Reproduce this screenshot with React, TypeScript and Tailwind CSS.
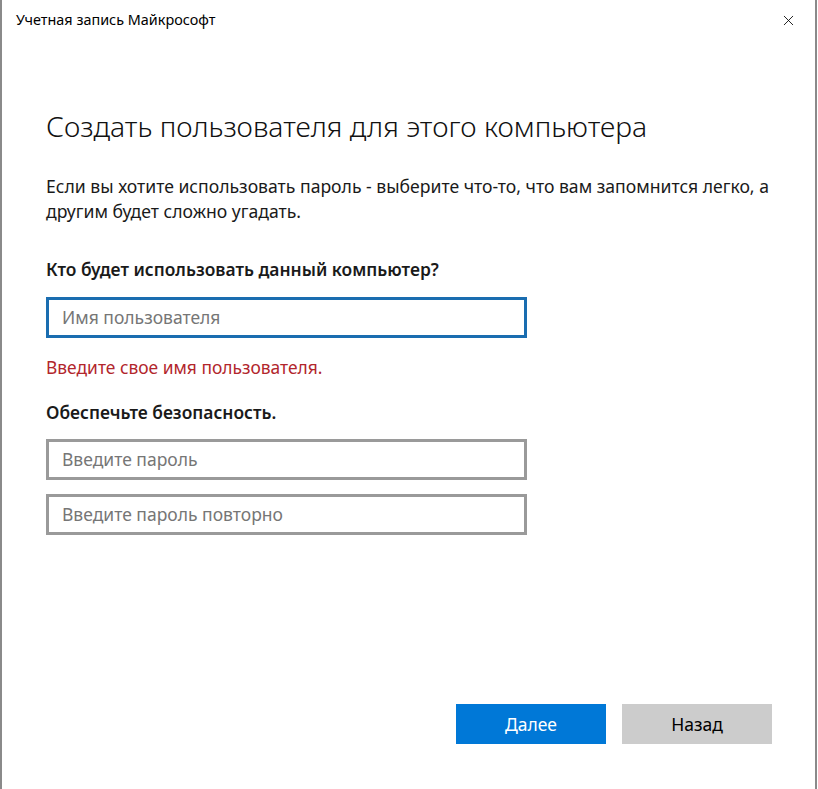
import { X } from 'lucide-react'

/* ── Field ─────────────────────────────────── */

function Field({ placeholder, focused }: { placeholder: string; focused?: boolean }) {
  return (
    <div
      className={[
        'w-[481px] h-[41px] border-[3px] flex items-center px-[13px] bg-white',
        focused ? 'border-[#1a6db0]' : 'border-[#9a9a9a]',
      ].join(' ')}
    >
      <span className="text-[17.5px] text-[#767676]">{placeholder}</span>
    </div>
  )
}

/* ── App ───────────────────────────────────── */

export default function App() {
  return (
    <div className="w-[818px] h-[789px] bg-white flex font-['Noto_Sans',sans-serif] text-[#1a1a1a]">
      <div className="flex-1 h-full border-l-2 border-r-2 border-[#8a8a8a] flex flex-col">
        {/* Title bar */}
        <div className="h-[40px] flex items-center justify-between pl-[14px] pr-[18px]">
          <span className="text-[14.4px] text-black">Учетная запись Майкрософт</span>
          <X size={17} strokeWidth={1.2} className="text-black" />
        </div>

        <div className="pl-[44px] flex flex-col flex-1">
          <h1 className="mt-[68px] text-[28.3px] font-light leading-[36px] text-[#111]">
            Создать пользователя для этого компьютера
          </h1>

          <p className="mt-[30px] text-[17.6px] leading-[25px] w-[760px]">
            Если вы хотите использовать пароль - выберите что-то, что вам запомнится легко, а
            другим будет сложно угадать.
          </p>

          <h2 className="mt-[33px] text-[17.4px] font-semibold leading-[24px]">
            Кто будет использовать данный компьютер?
          </h2>

          <div className="mt-[16px]">
            <Field placeholder="Имя пользователя" focused />
          </div>

          <p className="mt-[17px] text-[17.4px] leading-[24px] text-[#b2262c]">
            Введите свое имя пользователя.
          </p>

          <h2 className="mt-[21px] text-[17.4px] font-semibold leading-[24px]">
            Обеспечьте безопасность.
          </h2>

          <div className="mt-[15px] flex flex-col gap-[14px]">
            <Field placeholder="Введите пароль" />
            <Field placeholder="Введите пароль повторно" />
          </div>

          <div className="mt-auto mb-[45px] flex justify-end gap-[16px] pr-[43px]">
            <button className="w-[150px] h-[40px] bg-[#0078d7] text-white text-[17.5px]">
              Далее
            </button>
            <button className="w-[150px] h-[40px] bg-[#cccccc] text-black text-[17.5px]">
              Назад
            </button>
          </div>
        </div>
      </div>
      <div className="w-px h-full bg-white" />
    </div>
  )
}
